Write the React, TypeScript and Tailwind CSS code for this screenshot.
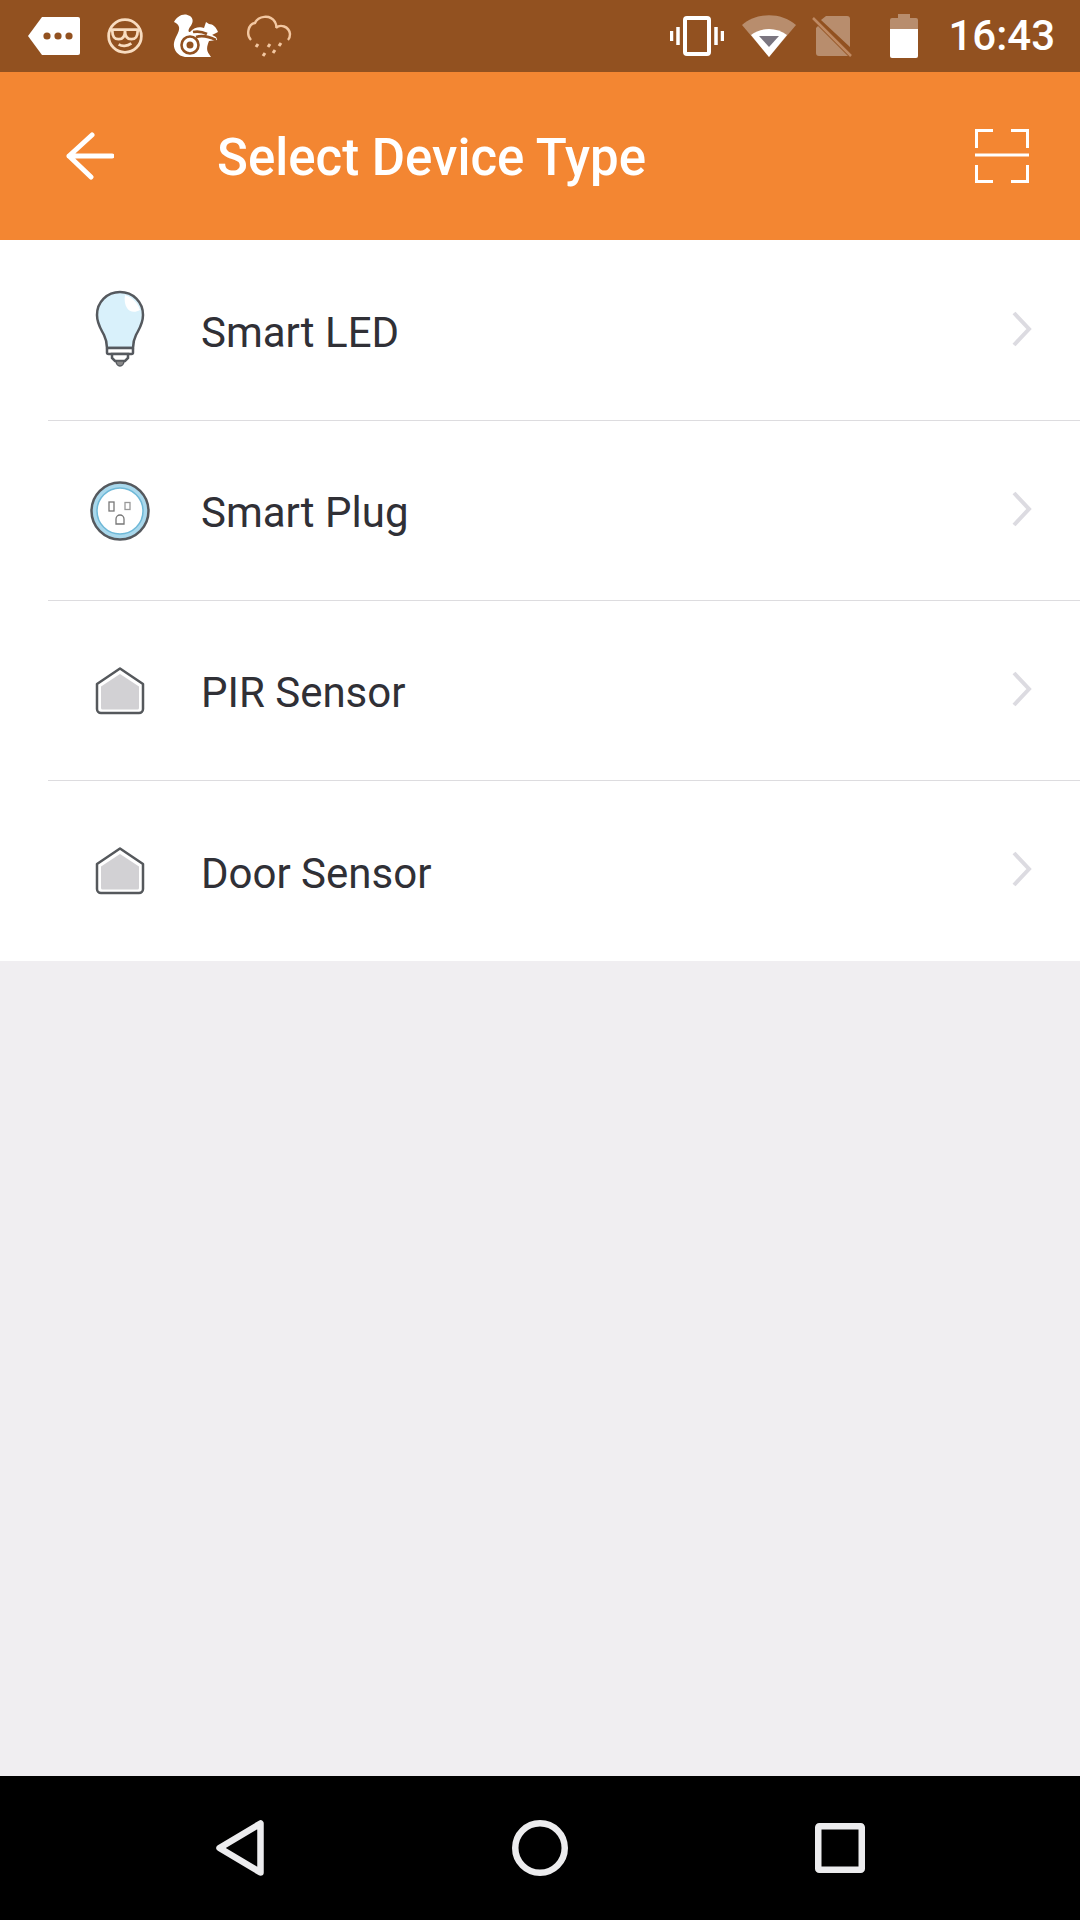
import React from "react";

const Bulb = () => (
  <svg className="mb-[4px]" width="60" height="84" viewBox="0 0 60 84" fill="none">
    <path d="M30 5C17 5 7 15 7 28c0 9 4 14 7 20 2 4 3 8 3 13h26c0-5 1-9 3-13 3-6 7-11 7-20C53 15 43 5 30 5Z" fill="#d9f1fb" stroke="#55595e" strokeWidth="2.500" />
    <path d="M35 8c7 2 13 8 15 15-5 3-11 2-13-2-2-3-3-8-2-13Z" fill="#ffffff" />
    <rect x="17" y="61" width="26" height="6" rx="1.5" fill="#fff" stroke="#55595e" strokeWidth="2.500" />
    <path d="M22 67h16v4l-3 3H25l-3-3Z" fill="#fff" stroke="#55595e" strokeWidth="2.500" />
    <path d="M26 74h8c0 3-2 5-4 5s-4-2-4-5Z" fill="#888" stroke="#55595e" strokeWidth="1.5" />
  </svg>
);

const Plug = () => (
  <svg width="60" height="60" viewBox="0 0 60 60" fill="none">
    <circle cx="30" cy="30" r="28.5" fill="#a9d8ec" stroke="#55595e" strokeWidth="2.500" />
    <circle cx="30" cy="30" r="23" fill="#fff" stroke="#6fb9d8" strokeWidth="1.5" />
    <rect x="19" y="21" width="5" height="9" fill="#fff" stroke="#777" strokeWidth="1.3" />
    <rect x="35" y="21.5" width="5" height="7" fill="#fff" stroke="#999" strokeWidth="1.3" />
    <path d="M26 43v-5a4 4 0 0 1 8 0v5Z" fill="#fff" stroke="#777" strokeWidth="1.3" />
  </svg>
);

const Sensor = () => (
  <svg width="50" height="48" viewBox="0 0 50 48" fill="none">
    <path d="M25 1.500 48 17v25a4 4 0 0 1-4 4H6a4 4 0 0 1-4-4V17Z" fill="#fff" stroke="#55585c" strokeWidth="2.500" strokeLinejoin="round" />
    <path d="M25 7 44 19.500V41a1.500 1.500 0 0 1-1.500 1.500h-35A1.500 1.500 0 0 1 6 41V19.500Z" fill="#d2d1d4" />
  </svg>
);

const Chevron = () => (
  <svg className="mb-[4px]" width="20" height="36" viewBox="0 0 20 36" fill="none">
    <path d="M2 2 17 18 2 34" stroke="#dcdbe1" strokeWidth="4" />
  </svg>
);

const rows: { label: string; icon: React.ReactNode }[] = [
  { label: "Smart LED", icon: <Bulb /> },
  { label: "Smart Plug", icon: <Plug /> },
  { label: "PIR Sensor", icon: <Sensor /> },
  { label: "Door Sensor", icon: <Sensor /> },
];

export default function App() {
  return (
    <div className="flex h-[1920px] w-[1080px] flex-col overflow-hidden bg-[#f0eef1] font-['Roboto',sans-serif]">
      {/* status bar */}
      <div className="flex h-[72px] shrink-0 items-center bg-[#925120] pl-[28px] pr-[25px]">
        <svg width="52" height="38" viewBox="0 0 52 38">
          <path d="M14 0h36a2 2 0 0 1 2 2v34a2 2 0 0 1-2 2H14L0 19Z" fill="#fff" />
          <circle cx="19" cy="19" r="3.600" fill="#925120" />
          <circle cx="30" cy="19" r="3.600" fill="#925120" />
          <circle cx="41" cy="19" r="3.600" fill="#925120" />
        </svg>
        <svg className="ml-[26px]" width="38" height="38" viewBox="0 0 36 36" fill="none" stroke="#f8dcc0" strokeWidth="2.600">
          <circle cx="18" cy="18" r="15.500" />
          <path d="M3 12h30M6 13c0 6 2 8 6 8s6-3 6-8c0 5 2 8 6 8s6-2 6-8" />
          <path d="M12 26c3 2 8 2 12-1" />
        </svg>
        <svg className="ml-[29px]" width="46" height="46" viewBox="0 0 46 46">
          <path d="M1 9C4 3 11-1 17 3c4 3 3 7 0 11-2 3-2 5 0 5 5-6 11-5 14-4l2-6 3 2c4 0 7 3 9 8l-6 3c0 0 6 2 5 5l-8 1c-2 5-3 9 0 13l2 3H12C4 43 0 36 1 30c1-6 6-11 5-16-1-3-3-4-5-5Z" fill="#fff" />
          <g fill="none" stroke="#925120" strokeWidth="2.600">
            <circle cx="17" cy="32" r="8.500" />
            <path d="M23 24c6-2 12-1 20 3M20 19c5-1 10 0 14 2" />
          </g>
          <circle cx="17" cy="32" r="3.500" fill="#925120" />
        </svg>
        <svg className="ml-[27px]" width="46" height="42" viewBox="0 0 46 42" fill="none" stroke="#f3c7a1" strokeWidth="2.400">
          <path d="M5 25C0 20 2 9 9 8c3-7 15-9 20-1 2 4 1 6 1 6 4-4 13-2 14 6 0 3-1 5-2 6" />
          <path d="M12 29l-2 3M24 29l-2 3M35 28l-2 3M19 38l-2 3M29 35l-2 3" strokeWidth="3" />
        </svg>

        <div className="flex-1" />

        <svg width="54" height="40" viewBox="0 0 54 40" fill="none" stroke="#fff">
          <rect x="15" y="2" width="24" height="36" rx="2" strokeWidth="4" />
          <path d="M8 11v18M1.500 15v10M46 11v18M52.500 15v10" strokeWidth="3.500" />
        </svg>
        <svg className="ml-[18px]" width="54" height="42" viewBox="0 0 54 42">
          <path d="M27 42 0 10C15-3 39-3 54 10Z" fill="#fff" fillOpacity="0.35" />
          <path d="M27 42 9 20c10-8 26-8 36 0Z" fill="#fff" />
          <path d="M27 32 17 21h20Z" fill="#7b7680" />
        </svg>
        <svg className="ml-[16px]" width="42" height="42" viewBox="0 0 42 42">
          <path d="M14 1h21a3 3 0 0 1 3 3v28L9 5ZM6 11l30 30H7a3 3 0 0 1-3-3V13Z" fill="#fff" fillOpacity="0.35" />
          <path d="M1 3l38 38" stroke="#bf8a63" strokeWidth="2.500" />
        </svg>
        <svg className="ml-[36px]" width="28" height="44" viewBox="0 0 28 44">
          <path d="M8 0h12v4h6a2 2 0 0 1 2 2v9H0V6a2 2 0 0 1 2-2h6Z" fill="#fff" fillOpacity="0.35" />
          <path d="M0 15h28v27a2 2 0 0 1-2 2H2a2 2 0 0 1-2-2Z" fill="#fff" />
        </svg>
        <span className="ml-[30px] text-[42px] font-medium leading-none text-white">16:43</span>
      </div>

      {/* header */}
      <div className="flex h-[168px] shrink-0 items-center bg-[#f38632] pl-[66px] pr-[51px]">
        <svg width="48" height="48" viewBox="0 0 48 48" fill="none" stroke="#fff" strokeWidth="5" strokeLinecap="round" strokeLinejoin="round">
          <path d="M46 24H3M26 3 3 24l22 21" />
        </svg>
        <span className="ml-[103px] flex-1 pt-[3px] text-[51px] font-medium leading-none text-white">Select Device Type</span>
        <svg width="54" height="54" viewBox="0 0 54 54" fill="none" stroke="#fff" strokeWidth="3">
          <path d="M18 1.500H1.500V19M36 1.500h16.500V19M18 52.500H1.500V36M36 52.500h16.500V36M0 26h54" />
        </svg>
      </div>

      {/* list */}
      <div className="flex flex-col bg-white pt-px">
        {rows.map((r, i) => (
          <div key={r.label} className={`ml-[48px] flex h-[180px] items-center pr-[48px] ${i < 3 ? "border-b border-[#dddcdf]" : ""}`}>
            <div className="flex w-[153px] justify-start pl-[42px]">
              <div className="flex w-[60px] justify-center">{r.icon}</div>
            </div>
            <span className="flex-1 pt-[5px] text-[42px] leading-none text-[#303036]">{r.label}</span>
            <Chevron />
          </div>
        ))}
      </div>

      <div className="flex-1" />

      {/* nav */}
      <div className="flex h-[144px] shrink-0 items-center bg-black">
        <div className="flex w-full items-center justify-between pl-[216px] pr-[215px]">
          <svg width="48" height="56" viewBox="0 0 48 56" fill="none" stroke="#ececee" strokeWidth="6.500" strokeLinejoin="round">
            <path d="M44.500 3.500v49L3.500 28Z" />
          </svg>
          <svg width="56" height="56" viewBox="0 0 56 56" fill="none" stroke="#ececee" strokeWidth="6.500">
            <circle cx="28" cy="28" r="24.750" />
          </svg>
          <svg width="50" height="50" viewBox="0 0 50 50" fill="none" stroke="#ececee" strokeWidth="6.500" strokeLinejoin="round">
            <rect x="3.250" y="3.250" width="43.500" height="43.500" rx="1" />
          </svg>
        </div>
      </div>
    </div>
  );
}
